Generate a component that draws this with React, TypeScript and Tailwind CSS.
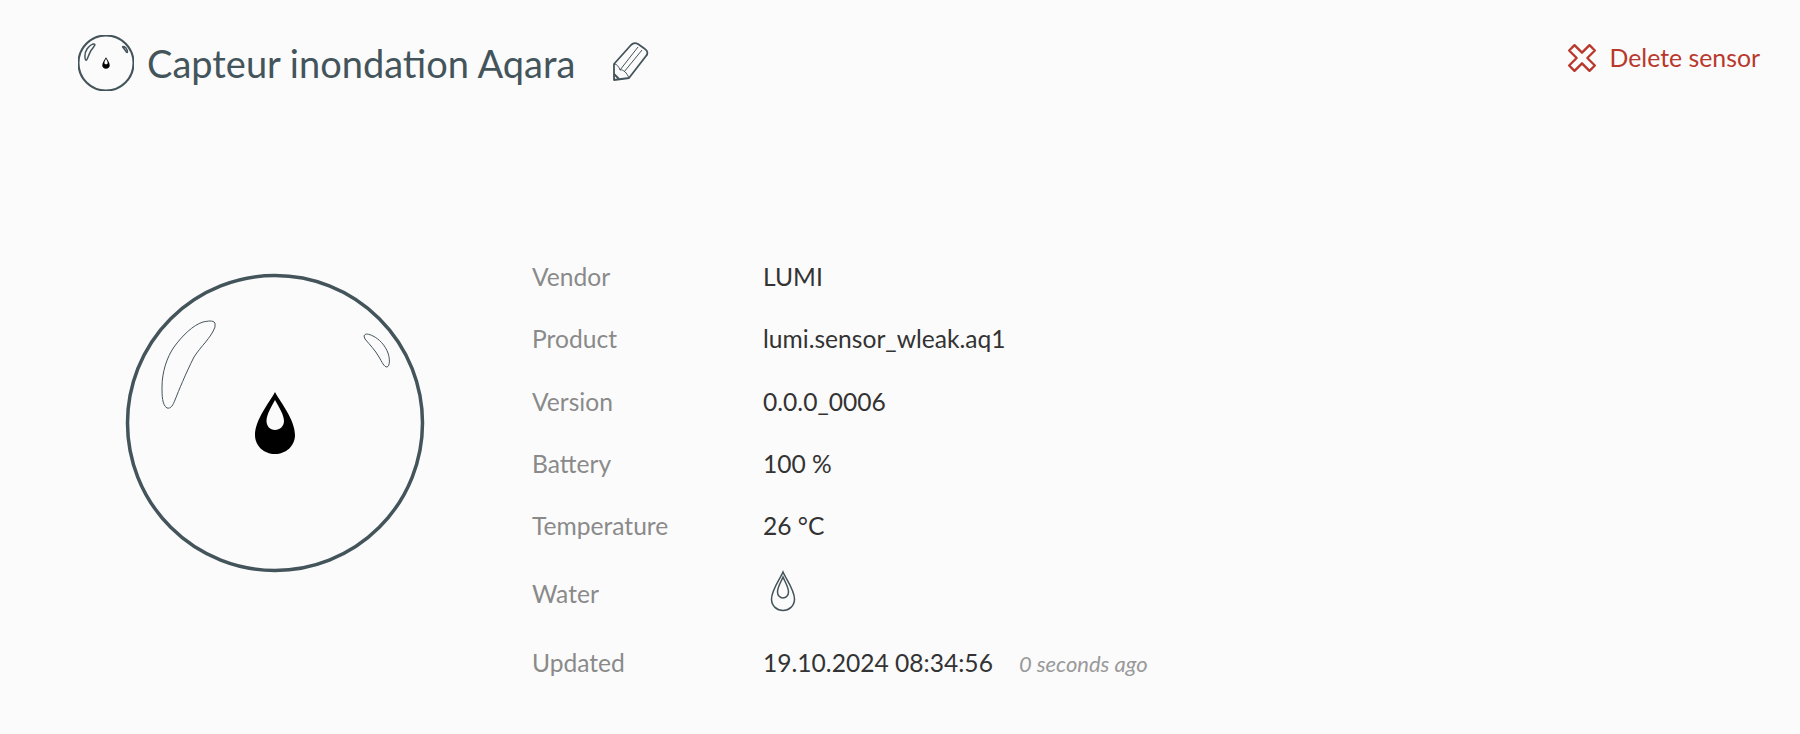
import React from 'react';

const rows: { label: string; value: React.ReactNode; height: string }[] = [
  { label: 'Vendor', value: 'LUMI', height: 'h-[62px]' },
  { label: 'Product', value: 'lumi.sensor_wleak.aq1', height: 'h-[63px]' },
  { label: 'Version', value: '0.0.0_0006', height: 'h-[62px]' },
  { label: 'Battery', value: '100 %', height: 'h-[62px]' },
  { label: 'Temperature', value: '26 °C', height: 'h-[63px]' },
];

const SensorIcon: React.FC<{ size: number; stroke: number; thin: number }> = ({ size, stroke, thin }) => (
  <svg width={size} height={size} viewBox="14 13 300 300" fill="none" className="shrink-0">
    <circle cx="164" cy="163" r="147.5" stroke="#44545b" strokeWidth={stroke} />
    <path
      d="M104 63C102 60 97 61 92 62C82 65 71 76 63 87C56 97 51 112 51 127C51 135 51 145 56 148C60 149 62 145 64 140C68 130 74 115 83 97C90 86 100 78 104 67Z"
      stroke="#44545b"
      strokeWidth={thin}
    />
    <path
      d="M253 76C254 73 258 74 262 76C268 79 274 85 277 93C279 99 279 106 276 107C273 107 271 102 268 97C264 90 259 85 254 79Z"
      stroke="#44545b"
      strokeWidth={thin}
    />
    <path
      fillRule="evenodd"
      fill="#000"
      d="M164 132C170 143 184 160 184 175C184 186 175 194 164 194C153 194 144 186 144 175C144 160 158 143 164 132ZM164 140C160 147 155.500 155 155.500 161C155.500 166 159 170 164 170C169 170 173 166 173 161C173 155 168 147 164 140Z"
    />
  </svg>
);

const PencilIcon = () => (
  <svg width="60" height="60" viewBox="0 0 60 60" fill="none" stroke="#44545b" className="shrink-0">
    <path
      d="M13 33L30 14C32 12 35 12 37 13L44 18C47 20 47 23 45 25L28 47L13 49Z"
      strokeWidth="1.800"
      strokeLinejoin="round"
    />
    <path d="M13 33C16 33 18 36 19 39C22 38 26 42 28 47M19 39L37 16M23 41L41 19" strokeWidth="1" />
    <path d="M13 43L18 48" strokeWidth="2" />
  </svg>
);

const DeleteIcon = () => (
  <svg width="30" height="30" viewBox="0 0 28 28" fill="none" className="shrink-0">
    <path
      d="M7 2L14 9L21 2L26 7L19 14L26 21L21 26L14 19L7 26L2 21L9 14L2 7Z"
      stroke="#b9382c"
      strokeWidth="2.200"
      strokeLinejoin="round"
    />
  </svg>
);

const WaterIcon = () => (
  <svg width="26" height="42" viewBox="0 0 26 42" fill="none" stroke="#44545b" strokeWidth="1.500" className="shrink-0">
    <path d="M13 2C16 9 24.500 20 24.500 29C24.500 36 19 40.500 13 40.500C7 40.500 1.500 36 1.500 29C1.500 20 10 9 13 2Z" />
    <path d="M13 7C15 12 18.500 17 18.500 22C18.500 25.500 16 28 13 28C10 28 7.500 25.500 7.500 22C7.500 17 11 12 13 7Z" />
  </svg>
);

export default function App() {
  return (
    <div className="h-[734px] overflow-hidden bg-[#fbfbfb] font-['Lato','Liberation_Sans',sans-serif]">
      {/* Header */}
      <div className="pl-[78px] pr-10 pt-[33px]">
        <div className="flex h-[60px] items-center justify-between">
          <div className="flex items-center">
            <SensorIcon size={56} stroke={11} thin={8} />
            <h1 className="ml-[13px] text-[38px] leading-[56px] font-normal text-[#44545b]">Capteur inondation Aqara</h1>
            <div className="ml-[26px] -translate-y-[2px]">
              <PencilIcon />
            </div>
          </div>
          <div className="flex -translate-y-[5px] items-center gap-[13px] text-[24.800px] text-[#b9382c]">
            <DeleteIcon />
            <span>Delete sensor</span>
          </div>
        </div>
      </div>

      {/* Details */}
      <div className="flex pl-[125px] pt-[152px]">
        <div className="pt-[28px]">
          <SensorIcon size={300} stroke={3.500} thin={1} />
        </div>
        <div className="ml-[107px] pt-px text-[24.600px]">
          {rows.map((row) => (
            <div key={row.label} className={`flex items-center ${row.height}`}>
              <div className="w-[231px] text-[#8a8a8a]">{row.label}</div>
              <div className="text-[#333]">{row.value}</div>
            </div>
          ))}
          <div className="flex h-[73px] items-center">
            <div className="w-[231px] text-[#8a8a8a]">Water</div>
            <div className="-translate-y-[4px] pl-[7px]">
              <WaterIcon />
            </div>
          </div>
          <div className="flex h-[64px] items-center">
            <div className="w-[231px] text-[#8a8a8a]">Updated</div>
            <div className="text-[#333]">19.10.2024 08:34:56</div>
            <div className="ml-[26px] text-[22px] text-[#999] italic">0 seconds ago</div>
          </div>
        </div>
      </div>
    </div>
  );
}
